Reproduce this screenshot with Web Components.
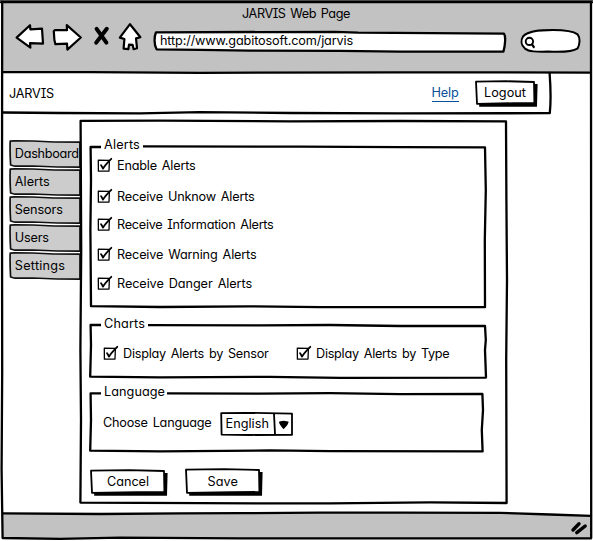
<!DOCTYPE html>
<html lang="en">
<head>
<meta charset="utf-8">
<title>JARVIS Web Page</title>
<style>
html,body{margin:0;background:#fff;overflow:hidden}
body{width:593px;height:541px;font:400 12.7px/18px Inter,"Open Sans",sans-serif;word-spacing:1.6px;font-feature-settings:"cv11","cv08";color:#000}
</style>
</head>
<body>
<sk-window></sk-window>
<script>
const base = `<style>
*{box-sizing:border-box}
:host{display:grid;box-sizing:border-box}
:host>*{grid-area:1/1}
svg{display:block;overflow:visible;fill:none;stroke:#000;stroke-width:2.3;stroke-linejoin:round;stroke-linecap:round}
</style>`;
function element(name, html, ready) {
  customElements.define(name, class extends HTMLElement {
    connectedCallback() {
      if (this.shadowRoot) return;
      this.attachShadow({mode: 'open'}).innerHTML = base + (typeof html === 'function' ? html(this) : html);
      if (ready) ready(this);
    }
  });
}

element('sk-window', `<style>
:host{width:593px;height:541px}
main{display:grid;grid-template-rows:73px 41px 398px 29px}
.body{display:grid;grid-template-columns:80px 427px;align-items:start}
</style>
<svg width="593" height="541" viewBox="0 0 593 541">
<path d="M2 2H591V539H2Z" fill="#fff" stroke="none"/>
<path d="M2 2H591V72H2Z" fill="#c2c2c2" stroke="none"/>
<path d="M3 513L250 513 340 512.5 480 513.5 591 515.5V538L3 538Z" fill="#c2c2c2" stroke="none"/>
<path d="M0 .4H593" stroke="#4a4a4a" stroke-width="1.2" stroke-linecap="butt"/>
<path d="M1 2.2H592M2.2 2L2 200 2.2 370 1.6 470 2.6 538 60 538.8 120 537.6 240 538.4 591 538.4M591 2L591.2 538M2 72L90 72.2 200 72.8 400 72.3 591 72.6" />
<path d="M3 513.3L100 514 180 513.4 240 513.2 320 512.7 400 512.6 500 512.8 550 514.5 591 515.8"/>
</svg>
<main>
<sk-chrome></sk-chrome>
<sk-header></sk-header>
<div class="body"><sk-tabs></sk-tabs><sk-panel></sk-panel></div>
<sk-status></sk-status>
</main>`);

element('sk-chrome', `<style>
:host{height:73px}
.col{display:flex;flex-direction:column}
.title{padding:5px 0 0 242px;height:21px}
.bar{display:flex;height:36px;margin-top:2px}
</style>
<div class="col">
<div class="title"><sk-text w="108">JARVIS Web Page</sk-text></div>
<div class="bar">
<svg width="153" height="36" viewBox="0 23 153 36">
<g fill="#fff" stroke-width="2.2">
<path d="M16.6 37.6L30 25.2 30.4 29.3 42 28.6 43 43.6 30 43.2 30.4 47.6Z"/>
<path d="M53.8 31.2L55 30.2 67 30.2 66.8 25.2 80.8 37.5 67.4 49.6 67 43.6 55.4 44.2 54.4 40Z"/>
<path d="M130 24.2L140.4 37.2 136 38.4 137 48.2 133.6 49.2 132.6 44.8 129 44.6 128.4 49.2 123.6 48.6 124.4 39 119.8 37.6Z"/></g>
<path d="M96.6 28.8L106.4 42.6M106.8 28.8L96.2 42.6" stroke-width="4"/>
</svg>
<sk-url></sk-url><sk-search></sk-search>
</div></div>`);

element('sk-url', `<style>:host{width:352px;height:36px}div{padding:9px 0 0 7px}</style>
<svg width="352" height="36" viewBox="153 23 352 36"><path d="M156 32.3L335 31.8 358 32.6 504 33.6C505.8 36 505.4 45 503.4 51.6L400 51.6 340 50.8 250 50.6 200 49.8 156.6 49.3C153.6 44 154.4 36 156 32.3Z" fill="#fff"/></svg>
<div><sk-text w="193">http://www.gabitosoft.com/jarvis</sk-text></div>`);

element('sk-search', `<style>:host{width:62px;height:36px;margin-left:15px}</style>
<svg width="62" height="36" viewBox="520 23 62 36"><path d="M523 36.5C528 30.5 541 30 553 30 565 30 573 31 577.6 34.4 580.4 38 580 44 577.6 48.4 572 52.4 560 52.2 548 51.6 536 51.8 529 51.8 525 48.6 520.8 45 520.8 40 523 36.5Z" fill="#fff" stroke-width="2"/><ellipse cx="529.4" cy="41.4" rx="3.7" ry="3.6" stroke-width="1.9"/><path d="M532 44.4L533.8 47" stroke-width="2.2"/></svg>`);

element('sk-header', `<style>
:host{height:41px}
div{display:flex;align-items:flex-start}
.brand{margin:12px 0 0 9px;width:422.5px}
.help{margin:11px 0 0 0;width:43.5px;color:#07509a;--line:#07509a}
</style>
<svg width="593" height="41" viewBox="0 73 593 41"><path d="M3 112.5L60 113 140 113.4 200 112.2 290 113 400 113.4 549.8 113.2C551.2 100 551 92 549.6 73"/></svg>
<div><sk-text class="brand" w="45">JARVIS</sk-text><sk-text class="help" w="27" link>Help</sk-text><sk-button kind="logout">Logout</sk-button></div>`);

const buttons = {
  logout: {w: 63, h: 28, l: 9, t: 4, tw: 42, m: '7px 0 0 0'},
  cancel: {w: 78, h: 28, l: 17, t: 4, tw: 42, m: '1px 0 0 0'},
  save: {w: 78, h: 29, l: 22.5, t: 5, tw: 30.5, m: '0 0 0 17px'}
};
element('sk-button', el => {
  const b = buttons[el.getAttribute('kind')], w = b.w, h = b.h;
  return `<style>:host{width:${w}px;height:${h}px;margin:${b.m}}div{padding:${b.t}px 0 0 ${b.l}px}</style>
<svg width="${w}" height="${h}"><path d="M4.2 4H${w - .4}L${w - 1} ${h - 1.2}H4.2Z" fill="#000" stroke="none"/>
<path d="M1 1.6L${w * .5} 1.2 ${w - 4} 2 ${w - 3.6} ${h - 5} ${w * .6} ${h - 4.8} 2 ${h - 4.2}Z" fill="#fff" stroke-width="1.8"/></svg>
<div><sk-text w="${b.tw}"><slot></slot></sk-text></div>`;
});

element('sk-tabs', `<style>:host{display:block;padding:26px 0 0 9px}</style>
<sk-tab w="64">Dashboard</sk-tab><sk-tab w="35">Alerts</sk-tab><sk-tab w="48">Sensors</sk-tab><sk-tab w="34">Users</sk-tab><sk-tab w="50.5">Settings</sk-tab>`);
element('sk-tab', el => `<style>:host{width:71px;height:28px}div{padding:5px 0 0 5.8px;white-space:nowrap}</style>
<svg width="71" height="28"><path d="M1.2 1.2L6 .8 24 1 45 2 71 2.2V27.2L48 27 24 26 6 26.2 1.6 25C1.2 18 .8 10 1.2 1.2Z" fill="#ccc" stroke="#111" stroke-width="1.7"/></svg>
<div><sk-text w="${el.getAttribute('w')}"><slot></slot></sk-text></div>`);

element('sk-panel', `<style>
:host{width:427px;height:384px;margin-top:6px}
.col{display:flex;flex-direction:column;padding:16px 0 0 10px}
.rows{display:grid;grid-template-rows:31px 28px 30px 29px 16px;padding:5px 0 0 7px}
.pair{display:grid;grid-template-columns:193px 1fr;padding:14px 0 0 13px}
.lang{display:flex;padding:12px 0 0 13px}
.actions{display:flex;margin-top:14px}
.choose{margin:3px 0 0;width:117px}
</style>
<svg width="427" height="384" viewBox="80 120 427 384"><path d="M80.6 120.8L160 120.6 290 121.4 400 121 506 121.4 506.4 200 507 280 506.2 360 506.6 503 430 502.4 330 503.4 200 503.2 80.4 502.6 81 420 80.4 350 81.2 250Z" fill="#fff"/></svg>
<div class="col">
<sk-group kind="alerts"><div class="rows">
<sk-check w="78.5">Enable Alerts</sk-check><sk-check w="137.5">Receive Unknow Alerts</sk-check><sk-check w="156.5">Receive Information Alerts</sk-check><sk-check w="139.5">Receive Warning Alerts</sk-check><sk-check w="135">Receive Danger Alerts</sk-check></div></sk-group>
<sk-group kind="charts"><div class="pair"><sk-check w="145.5">Display Alerts by Sensor</sk-check><sk-check w="133.5">Display Alerts by Type</sk-check></div></sk-group>
<sk-group kind="language"><div class="lang"><sk-text class="choose" w="108.5">Choose Language</sk-text><sk-select></sk-select></div></sk-group>
<div class="actions"><sk-button kind="cancel">Cancel</sk-button><sk-button kind="save">Save</sk-button></div>
</div>`);

const groups = {
  alerts: {t: 'Alerts', w: 36, y: 136, h: 179, p: 'M101 147H90.6L91 180 90.4 230 91 306.2 160 307 250 306.4 320 307.2 485 307.2 484.8 240 485.8 190 485 147.4 400 147.2 300 146.6 143 146.4'},
  charts: {t: 'Charts', w: 41, y: 315, h: 68, p: 'M101 325H90.6L91 345 90.2 376.6 160 377.4 270 376.8 340 377.8 486 377.6 485 350 485.8 340 485 325.8 400 326 330 325 260 325.4 148 325.2'},
  language: {t: 'Language', w: 61, y: 383, h: 71, p: 'M101 393.4H90.6L91 420 90.2 450.6 160 451.4 270 450.4 330 451.2 482.6 451.4 481.8 430 483 410 482.4 394 400 394.2 330 393.2 260 393.6 167 393.4'}
};
element('sk-group', el => {
  const g = groups[el.getAttribute('kind')];
  return `<style>:host{width:397px;height:${g.h}px}.in{display:flex;flex-direction:column}.legend{padding:0 0 0 14px}</style>
<svg width="397" height="${g.h}" viewBox="90 ${g.y} 397 ${g.h}"><path d="${g.p}" stroke-linecap="butt"/></svg>
<div class="in"><sk-text class="legend" w="${g.w}">${g.t}</sk-text><slot></slot></div>`;
});
element('sk-check', el => `<style>:host{grid-template-columns:20px auto;justify-content:start;height:16px;white-space:nowrap}:host>sk-text{grid-area:1/2}</style>
<svg width="20" height="16"><path d="M1.3 3.2L12.4 3.4 12 14 1.4 14.2Z" stroke-width="1.3"/><path d="M4 8.2C4.8 9 5.4 10.4 6 11.6 8 8 10.8 5.2 14.3 1.8" stroke-width="1.8"/></svg>
<sk-text w="${el.getAttribute('w')}"><slot></slot></sk-text>`);
element('sk-select', `<style>:host{width:74px;height:25px;margin-top:1px}div{padding:3px 0 0 5.5px}</style>
<svg width="74" height="25" viewBox="220 412 74 25"><path d="M221.2 413.2L245 412.8 292 413.6 292 434.8 250 435 221.6 434.6Z" fill="#fff" stroke-width="1.8"/><path d="M274 414L275 434" stroke-width="1.8"/><path d="M279.6 422L283.4 421.4 288 422.2C287.4 425 285.2 427 283.6 428.4 281.8 426.4 280 424.4 279.6 422Z" fill="#000" stroke-width="1.2"/></svg>
<div><sk-text w="43.5">English</sk-text></div>`);
element('sk-status', `<style>:host{height:29px;justify-content:end;padding:9px 6px 0 0}</style>
<svg width="17" height="14" viewBox="570 521 17 14"><path d="M573 530L579 523.8M576.8 532.6L585.2 526" stroke-width="3.4"/></svg>`);

/* Spreads the glyphs of a label over the width given in "w". */
element('sk-text', `<style>:host{display:block;height:16px;white-space:nowrap}span{display:inline-block;white-space:nowrap}:host([link]) span{border-bottom:1px solid var(--line);height:18px}</style><span><slot></slot></span>`, el => {
  const span = el.shadowRoot.querySelector('span');
  const slot = span.querySelector('slot');
  const text = slot.assignedNodes({flatten: true}).map(n => n.textContent).join('').trim();
  const want = parseFloat(el.getAttribute('w'));
  const natural = span.getBoundingClientRect().width;
  span.style.letterSpacing = (want - natural) / text.length + 'px';
});
</script>
</body>
</html>
